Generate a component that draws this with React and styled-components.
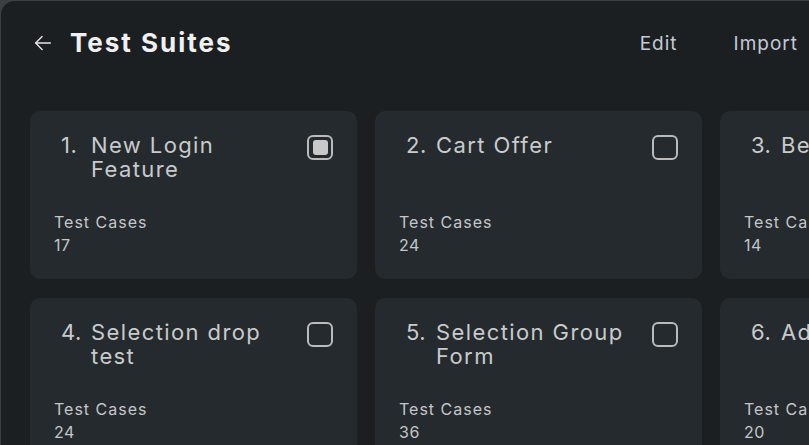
import styled, { createGlobalStyle } from "styled-components"

const GlobalStyle = createGlobalStyle`
  html, body {
    margin: 0;
    padding: 0;
    background: #3a3f44;
    overflow: hidden;
  }
  body {
    font-family: Inter, "Open Sans", sans-serif;
  }
`

const suites = [
  { name: "New Login Feature", count: 17, checked: true },
  { name: "Cart Offer", count: 24 },
  { name: "Beta payment", count: 14 },
  { name: "Selection drop test", count: 24 },
  { name: "Selection Group Form", count: 36 },
  { name: "Add Feature", count: 20 },
]

const Panel = styled.div`
  margin: 1px 0 0 1px;
  height: 444px;
  width: 808px;
  background: #1c1f22;
  border-top-left-radius: 14px;
  overflow: hidden;
`
const Header = styled.div`
  display: flex;
  align-items: center;
  height: 84px;
  padding: 0 11px 0 31px;
`
const Back = styled.button`
  display: flex;
  align-items: center;
  background: none;
  border: 0;
  padding: 0;
  margin-right: 16px;
  color: #e6e6e6;
  cursor: pointer;
`
const Title = styled.h1`
  margin: 0 0 2px;
  font-size: 26px;
  font-weight: 700;
  color: #f0f0f0;
  letter-spacing: 2px;
  flex: 1;
`
const Action = styled.button`
  background: none;
  border: 0;
  padding: 0;
  font-family: inherit;
  font-size: 19px;
  letter-spacing: 1px;
  color: #c3cad6;
  margin-left: ${(p) => p.gap || 0}px;
  cursor: pointer;
  white-space: nowrap;
`
const Grid = styled.div`
  display: grid;
  grid-template-columns: repeat(3, 327px);
  grid-auto-rows: 168px;
  gap: 19px 18px;
  padding: 26px 0 0 29px;
`
const Card = styled.div`
  background: #242a2e;
  border-radius: 10px;
  padding: 22px 24px 0 24px;
  display: flex;
  flex-direction: column;
`
const CardTop = styled.div`
  display: flex;
  align-items: flex-start;
  justify-content: space-between;
  height: 78px;
`
const Name = styled.div`
  display: flex;
  padding-left: 7px;
  font-size: 22px;
  line-height: 24px;
  color: #c9cacb;
  letter-spacing: 1.4px;
  width: 236px;
`
const Num = styled.span`
  flex: none;
  width: 30px;
  letter-spacing: 0.5px;
`
const Check = styled.span`
  flex: none;
  box-sizing: border-box;
  width: 26px;
  height: 25px;
  margin-top: 2px;
  border: 2px solid #b9bbbd;
  border-radius: 6px;
  display: flex;
  align-items: center;
  justify-content: center;
  &::after {
    content: "";
    display: ${(p) => (p.checked ? "block" : "none")};
    width: 15px;
    height: 15px;
    border-radius: 3px;
    background: #c6c8ca;
  }
`
const Label = styled.div`
  font-size: 16px;
  line-height: 23px;
  letter-spacing: 1px;
  color: #c4c6c8;
`
const Count = styled.div`
  font-size: 16px;
  line-height: 23px;
  letter-spacing: 0.6px;
  color: #c4c6c8;
`

const App = () => {
  return (
    <>
      <GlobalStyle />
      <Panel>
        <Header>
          <Back aria-label="Back">
            <svg width="22" height="22" viewBox="0 0 24 24" fill="none" stroke="currentColor" strokeWidth="1.5" strokeLinecap="round" strokeLinejoin="round">
              <path d="M20 12H4" />
              <path d="M11 5l-7 7 7 7" />
            </svg>
          </Back>
          <Title>Test Suites</Title>
          <Action>Edit</Action>
          <Action gap={56}>Import</Action>
        </Header>
        <Grid>
          {suites.map((s, i) => (
            <Card key={i}>
              <CardTop>
                <Name>
                  <Num>{i + 1}.</Num>
                  <span>{s.name}</span>
                </Name>
                <Check checked={s.checked} />
              </CardTop>
              <Label>Test Cases</Label>
              <Count>{s.count}</Count>
            </Card>
          ))}
        </Grid>
      </Panel>
    </>
  )
}

export default App
